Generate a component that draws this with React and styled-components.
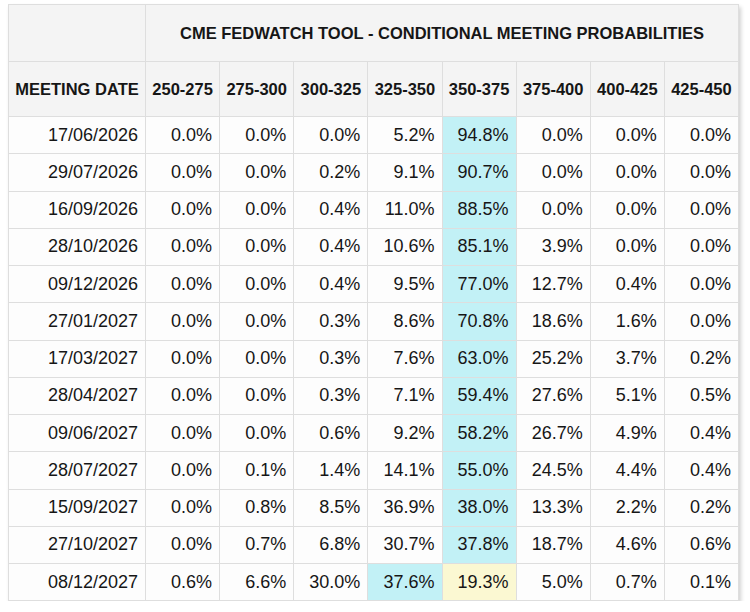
import styled, { createGlobalStyle } from "styled-components";

const GlobalStyle = createGlobalStyle`
  html, body {
    margin: 0;
    background: #fff;
  }
  body {
    font-family: "Liberation Sans", Arial, sans-serif;
  }
`;

const Page = styled.div`
  padding: 4px 0 0 8px;
`;

const Table = styled.table`
  border-collapse: collapse;
  width: 731px;
  table-layout: fixed;
  box-shadow: 2px 3px 4px rgba(0, 0, 0, 0.18);
  color: #161616;
`;

const Th = styled.th`
  background: #f4f4f4;
  border: 1px solid #dedede;
  font-weight: bold;
  font-size: 16.5px;
  height: ${(p) => (p.$title ? "56px" : "54px")};
  text-align: center;
  padding: 0;
  white-space: nowrap;
`;

const Td = styled.td`
  border: 1px solid #dedede;
  background: ${(p) =>
    p.$hl === "blue" ? "#c2f1f6" : p.$hl === "yellow" ? "#fbf8d2" : "#fdfdfd"};
  font-size: 18px;
  height: 36.25px;
  text-align: right;
  padding: 0 7px 0 0;
  white-space: nowrap;
`;

const ranges = [
  "250-275",
  "275-300",
  "300-325",
  "325-350",
  "350-375",
  "375-400",
  "400-425",
  "425-450",
];

const rows = [
  ["17/06/2026", ["0.0", "0.0", "0.0", "5.2", "94.8", "0.0", "0.0", "0.0"]],
  ["29/07/2026", ["0.0", "0.0", "0.2", "9.1", "90.7", "0.0", "0.0", "0.0"]],
  ["16/09/2026", ["0.0", "0.0", "0.4", "11.0", "88.5", "0.0", "0.0", "0.0"]],
  ["28/10/2026", ["0.0", "0.0", "0.4", "10.6", "85.1", "3.9", "0.0", "0.0"]],
  ["09/12/2026", ["0.0", "0.0", "0.4", "9.5", "77.0", "12.7", "0.4", "0.0"]],
  ["27/01/2027", ["0.0", "0.0", "0.3", "8.6", "70.8", "18.6", "1.6", "0.0"]],
  ["17/03/2027", ["0.0", "0.0", "0.3", "7.6", "63.0", "25.2", "3.7", "0.2"]],
  ["28/04/2027", ["0.0", "0.0", "0.3", "7.1", "59.4", "27.6", "5.1", "0.5"]],
  ["09/06/2027", ["0.0", "0.0", "0.6", "9.2", "58.2", "26.7", "4.9", "0.4"]],
  ["28/07/2027", ["0.0", "0.1", "1.4", "14.1", "55.0", "24.5", "4.4", "0.4"]],
  ["15/09/2027", ["0.0", "0.8", "8.5", "36.9", "38.0", "13.3", "2.2", "0.2"]],
  ["27/10/2027", ["0.0", "0.7", "6.8", "30.7", "37.8", "18.7", "4.6", "0.6"]],
  ["08/12/2027", ["0.6", "6.6", "30.0", "37.6", "19.3", "5.0", "0.7", "0.1"]],
];

function cellTone(rowIdx, colIdx) {
  const last = rowIdx === rows.length - 1;
  if (last) {
    if (colIdx === 3) return "blue";
    if (colIdx === 4) return "yellow";
    return null;
  }
  return colIdx === 4 ? "blue" : null;
}

export default function App() {
  return (
    <Page>
      <GlobalStyle />
      <Table>
        <colgroup>
          <col style={{ width: 137 }} />
          {ranges.map((r) => (
            <col key={r} />
          ))}
        </colgroup>
        <thead>
          <tr>
            <Th $title></Th>
            <Th $title colSpan={8}>
              CME FEDWATCH TOOL - CONDITIONAL MEETING PROBABILITIES
            </Th>
          </tr>
          <tr>
            <Th>MEETING DATE</Th>
            {ranges.map((r) => (
              <Th key={r}>{r}</Th>
            ))}
          </tr>
        </thead>
        <tbody>
          {rows.map(([date, vals], i) => (
            <tr key={date}>
              <Td>{date}</Td>
              {vals.map((v, j) => (
                <Td key={j} $hl={cellTone(i, j)}>
                  {v}%
                </Td>
              ))}
            </tr>
          ))}
        </tbody>
      </Table>
    </Page>
  );
}
